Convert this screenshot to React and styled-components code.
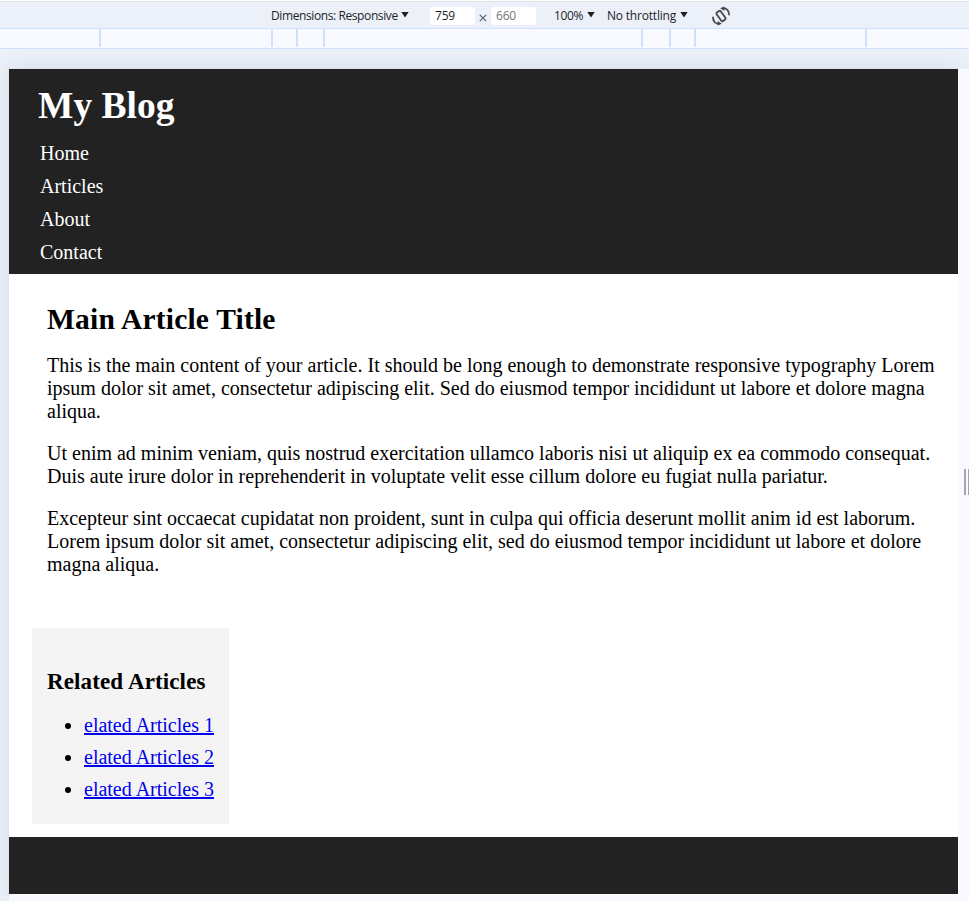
import React from 'react';
import styled, { createGlobalStyle } from 'styled-components';

const GlobalStyle = createGlobalStyle`
  * { box-sizing: border-box; }
  html, body { margin: 0; padding: 0; overflow: hidden; }
`;

const Screen = styled.div`
  width: 969px;
  height: 901px;
  display: flex;
  flex-direction: column;
  overflow: hidden;
  background: #ebf0f9;
`;

const Toolbar = styled.div`
  height: 29px;
  flex: none;
  display: flex;
  align-items: center;
  padding: 2px 0 0 271px;
  border-top: 1px solid #fdfdfd;
  border-bottom: 1px solid #d0e0fd;
  box-shadow: inset 0 1px 0 #e1e3e3;
  background: #ebf0f9;
  color: #1f1f1f;
  font: 12px/16px "Open Sans", "Noto Sans", sans-serif;
  white-space: nowrap;
`;

const Menus = styled.div`
  display: flex;
  align-items: center;
  margin-left: 18px;
`;

const Label = styled.span`
  flex: none;
  width: ${(p) => p.$width}px;
  letter-spacing: ${(p) => p.$spacing}px;
`;

const Caret = styled.i`
  flex: none;
  width: 8px;
  height: 6px;
  margin: 0 ${(p) => p.$gap}px 2px 3px;
  background: #1f1f1f;
  clip-path: polygon(0 0, 100% 0, 50% 100%);
`;

const SizeField = styled.span`
  width: 45px;
  height: 18px;
  padding-left: 5px;
  border-radius: 3px;
  background: #fff;
  color: ${(p) => (p.$muted ? '#757575' : '#1f1f1f')};
  line-height: 18px;
  letter-spacing: -0.2px;
`;

const TimesIcon = styled.svg`
  width: 8px;
  height: 8px;
  margin: 4px 4px 0;
`;

const RotateIcon = styled.svg`
  flex: none;
  width: 20px;
  height: 20px;
`;

const Ruler = styled.div`
  height: 20px;
  flex: none;
  display: flex;
  border-bottom: 1px solid #d0e0fd;
  background: #f8faff;
`;

const Segment = styled.div`
  width: ${(p) => p.$width}px;
  height: 18px;
  border-right: 2px solid #d0e0fd;
`;

const Stage = styled.div`
  flex: 1;
  min-height: 0;
  display: flex;
  padding: 20px 0 0 9px;
`;

const Device = styled.div`
  width: 949px;
  height: 825px;
  flex: none;
  display: flex;
  flex-direction: column;
  background: #fff;
  color: #000;
  box-shadow: 0 0 0 1px #dfe2e4, 0 0 20px rgba(40, 70, 60, 0.1);
  font: 20px/23px "Liberation Serif", "Times New Roman", serif;
`;

const Gutter = styled.div`
  flex: 1;
  position: relative;
  display: flex;
  align-items: center;
  background: #f8faff;
`;

const Handle = styled.div`
  width: 5px;
  height: 26px;
  margin-left: 6px;
  border: solid #a5a5a5;
  border-width: 0 1px 0 2px;
`;

const Header = styled.header`
  height: 205px;
  flex: none;
  padding: 15px 29px;
  background: #222;
  color: #fff;
`;

const SiteTitle = styled.h1`
  margin: 0 0 15px;
  font-size: 37.5px;
  line-height: 43px;
`;

const Nav = styled.nav`
  display: grid;
  gap: 10px;
  padding-left: 2px;
`;

const NavLink = styled.a`
  color: #fff;
`;

const Article = styled.article`
  padding: 27px 0 0 38px;
  height: 354px;
`;

const ArticleTitle = styled.h2`
  margin: 0 0 17px;
  font-size: 29.5px;
  line-height: 36px;
  letter-spacing: 0.2px;
`;

const Paragraph = styled.p`
  margin: 0 0 19px;
  white-space: pre-line;
`;

const Related = styled.aside`
  width: 197px;
  height: 196px;
  margin: 0 0 13px 23px;
  padding: 40px 0 0 15px;
  background: #f4f4f4;
`;

const RelatedTitle = styled.h3`
  margin: 0 0 18px;
  font-size: 23px;
  line-height: 28px;
  letter-spacing: 0.13px;
`;

const RelatedList = styled.ul`
  display: grid;
  gap: 9px;
  margin: 0;
  padding-left: 37px;
`;

const RelatedLink = styled.a`
  color: #0000ee;
`;

const Footer = styled.footer`
  height: 57px;
  flex: none;
  background: #222;
`;

const BottomStrip = styled.div`
  height: 7px;
  margin-left: 9px;
  flex: none;
  background: #f8faff;
`;

const segments = [101, 172, 25, 27, 318, 28, 25, 171];
const nav = ['Home', 'Articles', 'About', 'Contact'];
const paragraphs = [
  'This is the main content of your article. It should be long enough to demonstrate responsive typography Lorem\nipsum dolor sit amet, consectetur adipiscing elit. Sed do eiusmod tempor incididunt ut labore et dolore magna\naliqua.',
  'Ut enim ad minim veniam, quis nostrud exercitation ullamco laboris nisi ut aliquip ex ea commodo consequat.\nDuis aute irure dolor in reprehenderit in voluptate velit esse cillum dolore eu fugiat nulla pariatur.',
  'Excepteur sint occaecat cupidatat non proident, sunt in culpa qui officia deserunt mollit anim id est laborum.\nLorem ipsum dolor sit amet, consectetur adipiscing elit, sed do eiusmod tempor incididunt ut labore et dolore\nmagna aliqua.',
];

export default function App() {
  return (
    <>
      <GlobalStyle />
      <Screen>
        <Toolbar>
          <Label $width={127} $spacing={-0.4}>Dimensions: Responsive</Label>
          <Caret $gap={21} />
          <SizeField>759</SizeField>
          <TimesIcon viewBox="0 0 8 8" stroke="#5c5f60" strokeWidth="1.2">
            <path d="M.8.8 7.2 7.2M7.2.8.8 7.2" />
          </TimesIcon>
          <SizeField $muted>660</SizeField>
          <Menus>
            <Label $width={30} $spacing={-0.4}>100%</Label>
            <Caret $gap={12} />
            <Label $width={70} $spacing={-0.2}>No throttling</Label>
            <Caret $gap={23} />
            <RotateIcon viewBox="0 0 20 20" fill="none" stroke="#474747" strokeWidth="1.8">
              <rect x="7.5" y="4.8" width="5" height="10.4" rx="1.2" transform="rotate(-36 10 10)" />
              <path d="M11.5 2.2C16 1.8 18.2 5 18 9.3M8.5 17.8C4 18.2 1.8 15 2 10.7" />
              <path d="M9.2 2.2 13.4.6V5ZM10.8 17.8 6.6 19.4V15Z" fill="#474747" stroke="none" />
            </RotateIcon>
          </Menus>
        </Toolbar>
        <Ruler>
          {segments.map((w, i) => <Segment key={i} $width={w} />)}
        </Ruler>
        <Stage>
          <Device>
            <Header>
              <SiteTitle>My Blog</SiteTitle>
              <Nav>{nav.map((n) => <NavLink key={n}>{n}</NavLink>)}</Nav>
            </Header>
            <Article>
              <ArticleTitle>Main Article Title</ArticleTitle>
              {paragraphs.map((p, i) => <Paragraph key={i}>{p}</Paragraph>)}
            </Article>
            <Related>
              <RelatedTitle>Related Articles</RelatedTitle>
              <RelatedList>
                {[1, 2, 3].map((n) => (
                  <li key={n}><RelatedLink href="#">elated Articles {n}</RelatedLink></li>
                ))}
              </RelatedList>
            </Related>
            <Footer />
          </Device>
          <Gutter><Handle /></Gutter>
        </Stage>
        <BottomStrip />
      </Screen>
    </>
  );
}
